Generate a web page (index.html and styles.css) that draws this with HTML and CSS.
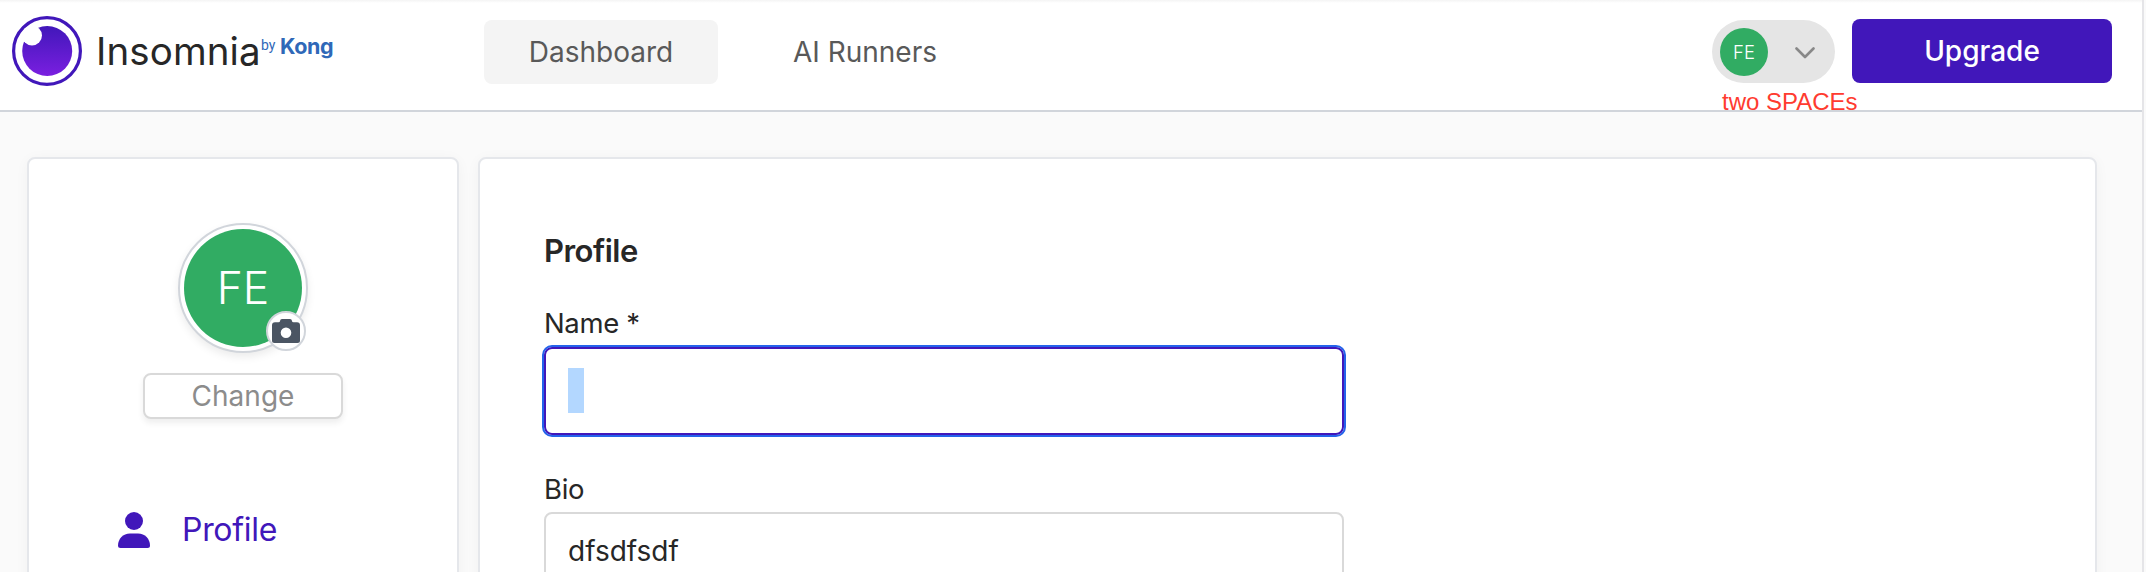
FILE: index.html
```html
<!DOCTYPE html>
<html lang="en">
<head>
<meta charset="utf-8">
<title>Insomnia</title>
<link rel="stylesheet" href="styles.css">
</head>
<body>
<div class="app">
  <header class="header">
    <div class="brand">
      <svg class="logo" viewBox="0 0 70 70" aria-hidden="true">
        <defs><linearGradient id="orb" x1="0" y1="0" x2="0" y2="1"><stop offset="0" stop-color="#4117ba"/><stop offset="1" stop-color="#7a1fe0"/></linearGradient></defs>
        <circle cx="35" cy="35" r="33.4" fill="#fff" stroke="#4117ba" stroke-width="3.2"/>
        <circle cx="35.2" cy="35" r="25" fill="url(#orb)"/>
        <circle cx="20" cy="19.5" r="10" fill="#fff"/>
        <path d="M9 24 16 13 26.500 10.500 20 24 12 26Z" fill="#fff"/>
      </svg>
      <span class="brand-name">Insomnia</span>
      <span class="brand-by">by</span>
      <span class="brand-kong">Kong</span>
    </div>
    <nav class="nav">
      <a class="nav-link active">Dashboard</a>
      <a class="nav-link">AI Runners</a>
    </nav>
    <div class="actions">
      <div class="account">
        <span class="avatar-small">FE</span>
        <svg class="chevron" viewBox="0 0 20 12" aria-hidden="true"><path d="M1.5 1.5 10 10 18.5 1.5" fill="none" stroke="#888" stroke-width="2.6" stroke-linecap="round" stroke-linejoin="round"/></svg>
      </div>
      <button class="upgrade">Upgrade</button>
    </div>
    <span class="note">two SPACEs</span>
  </header>
  <main class="content">
    <aside class="card sidebar">
      <div class="avatar">
        <span class="avatar-face">FE</span>
        <span class="badge">
          <svg viewBox="0 0 28 24" width="28" height="24" aria-hidden="true"><path fill="#4b5563" fill-rule="evenodd" d="M3 3.3H6.5Q8 3.3 8 2 8.200 0 10 0H18Q19.800 0 20 2 20 3.300 21.500 3.300H25Q28 3.300 28 6.300V21.500Q28 24 25.500 24H2.500Q0 24 0 21.500V6.300Q0 3.300 3 3.300ZM14 8.400A5.300 5.300 0 1 0 14 19 5.300 5.300 0 1 0 14 8.400Z"/></svg>
        </span>
      </div>
      <button class="change">Change</button>
      <a class="menu-item">
        <svg viewBox="0 0 32 36" width="32" height="36" aria-hidden="true"><circle cx="16" cy="9" r="9" fill="#4117ba"/><path d="M12 21.500H20C27 21.500 32 27 32 33.500Q32 36 29.500 36H2.500Q0 36 0 33.500C0 27 5 21.500 12 21.500Z" fill="#4117ba"/></svg>
        <span>Profile</span>
      </a>
    </aside>
    <section class="card panel">
      <h1 class="title">Profile</h1>
      <label class="label">Name *</label>
      <div class="field focused"><span class="selection"></span></div>
      <label class="label label-bio">Bio</label>
      <div class="field bio">dfsdfsdf</div>
    </section>
  </main>
</div>
</body>
</html>
```
FILE: styles.css
```css
* { box-sizing: border-box; }
body {
  margin: 0;
  height: 572px;
  overflow: hidden;
  background: #fafafa;
  font-family: Inter, "Liberation Sans", sans-serif;
  font-size: 28px;
  color: #272727;
}
button { font: inherit; margin: 0; padding: 0; }
.app { width: 2144px; height: 572px; overflow: hidden; border-right: 2px solid #e5e5e8; }
.header {
  position: relative;
  display: flex;
  height: 112px;
  background: linear-gradient(#f4f4f4, #fff 3px);
  border-bottom: 2px solid #d1d5db;
}
.brand { display: flex; width: 484px; padding-left: 12px; }
.logo { width: 70px; height: 70px; margin: 16px 14px 0 0; }
.brand-name { width: 165px; margin-top: 27px; font-size: 38.500px; line-height: 48px; letter-spacing: 0.100px; }
.brand-by { width: 19px; margin-top: 35px; font: 14px/20px Roboto, sans-serif; color: #2f68b8; }
.brand-kong { margin-top: 33px; font: 700 21.500px/26px Inter, sans-serif; letter-spacing: -0.400px; color: #2f68b8; }
.nav { display: flex; gap: 30px; padding-top: 20px; }
.nav-link { display: flex; justify-content: center; width: 234px; height: 64px; line-height: 64px; border-radius: 8px; color: #595959; white-space: nowrap; }
.active { background: #f4f4f4; }
.actions { display: flex; gap: 17px; margin-left: auto; margin-right: 30px; padding-top: 19px; }
.account { display: flex; align-items: center; justify-content: space-between; width: 123px; height: 63px; margin-top: 1px; padding: 0 20px 0 8px; border-radius: 32px; background: #e5e5e5; }
.avatar-small { width: 48px; height: 48px; border-radius: 50%; background: #31ac63; color: #fff; font-size: 18.500px; font-weight: 300; line-height: 48px; text-align: center; }
.chevron { width: 20px; height: 12px; margin-top: 2px; }
.upgrade { width: 260px; height: 64px; border: 0; border-radius: 8px; background: #4117ba; color: #fff; font-weight: 500; line-height: 64px; }
.note { position: absolute; left: 1722px; top: 88px; font: 24px/28px "Liberation Sans", sans-serif; color: #ff3b30; white-space: nowrap; }
.content { display: flex; gap: 19px; padding: 45px 0 0 27px; }
.card { height: 500px; background: #fff; border: 2px solid #e5e7eb; border-radius: 8px; box-shadow: 0 2px 14px rgba(0, 0, 0, 0.040); }
.sidebar { display: flex; flex-direction: column; align-items: center; width: 432px; padding-top: 64px; }
.avatar { position: relative; width: 130px; height: 130px; padding: 4px; border: 2px solid #d1d5db; border-radius: 50%; background: #fff; box-shadow: 0 4px 8px rgba(0, 0, 0, 0.080); }
.avatar-face { display: block; height: 118px; border-radius: 50%; background: #31ac63; color: #fff; font-size: 44.500px; font-weight: 300; line-height: 118px; text-align: center; }
.badge { position: absolute; right: 0; bottom: 0; display: flex; align-items: center; justify-content: center; width: 40px; height: 40px; border: 2px solid #d1d5db; border-radius: 50%; background: #fff; }
.change { width: 200px; height: 46px; margin-top: 20px; border: 2px solid #d9d9d9; border-radius: 8px; background: #fff; box-shadow: 0 4px 6px rgba(0, 0, 0, 0.070); color: #8c8c8c; line-height: 42px; }
.menu-item { display: flex; align-self: flex-start; gap: 32px; margin: 93px 0 0 89px; font-size: 32px; line-height: 36px; letter-spacing: -0.300px; color: #4117ba; }
.panel { width: 1619px; padding: 72px 64px 0; }
.title { margin: 0 0 32px; font-size: 31px; font-weight: 600; line-height: 40px; letter-spacing: -0.500px; }
.label { display: block; height: 40px; margin-bottom: 4px; font-size: 27.500px; line-height: 40px; letter-spacing: -0.350px; }
.label-bio { margin-bottom: 3px; }
.field { width: 800px; height: 88px; margin-bottom: 34px; padding: 19px 22px; border: 2px solid #d9d9d9; border-radius: 8px; background: #fff; }
.focused { border-color: #4117ba; outline: 2px solid #2563eb; }
.selection { display: block; width: 16px; height: 45px; background: #b3d7ff; }
.bio { padding-top: 14px; line-height: 46px; }
```
